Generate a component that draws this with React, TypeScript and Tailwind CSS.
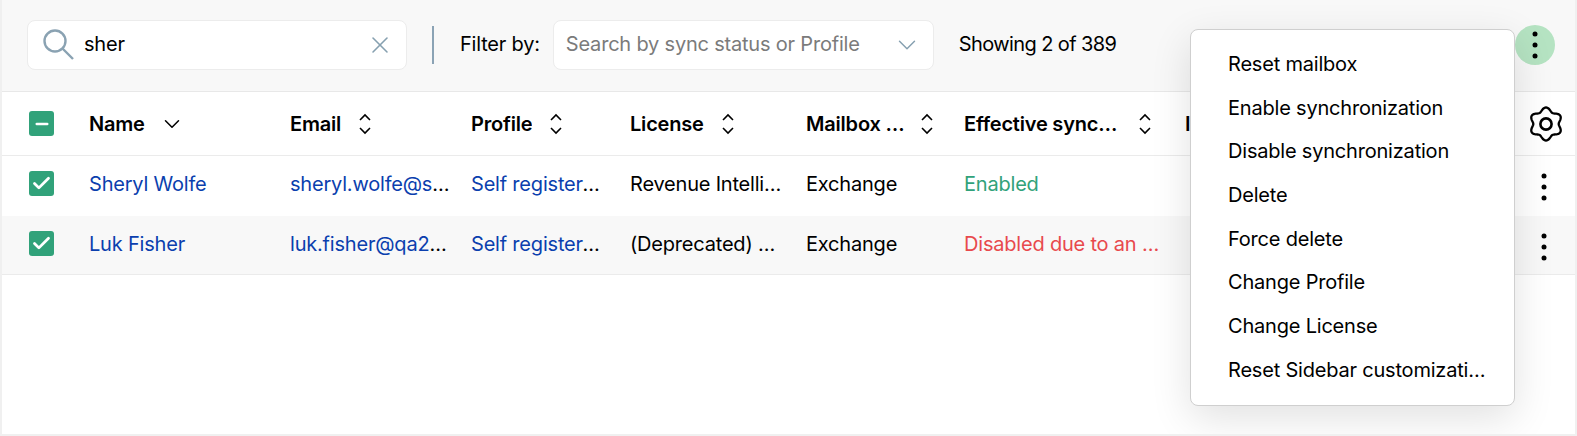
import { ChevronDown, X, Check, Minus } from "lucide-react";

const gridCols = "grid grid-cols-[87px_201px_181px_159px_176px_158px_221px_1fr_60px] items-center";

const menuItems = [
  "Reset mailbox",
  "Enable synchronization",
  "Disable synchronization",
  "Delete",
  "Force delete",
  "Change Profile",
  "Change License",
  "Reset Sidebar customization",
];

// six soft lobes round the centre
const gearPath =
  Array.from({ length: 120 }, (_, i) => {
    const a = (i / 120) * Math.PI * 2;
    const r = 14.6 + 1.9 * Math.cos(6 * a);
    return `${i === 0 ? "M" : "L"}${(18 + r * Math.sin(a)).toFixed(2)} ${(18 - r * Math.cos(a)).toFixed(2)}`;
  }).join(" ") + " Z";

function SortIcon() {
  return (
    <svg width="14" height="24" viewBox="0 0 14 24" fill="none" stroke="#000" strokeWidth="1.6" className="shrink-0">
      <path d="M2 8 L7 3 L12 8" />
      <path d="M2 16 L7 21 L12 16" />
    </svg>
  );
}

function Kebab() {
  return (
    <svg width="6" height="28" viewBox="0 0 6 28" fill="#000">
      <circle cx="3" cy="3" r="2.5" />
      <circle cx="3" cy="14" r="2.5" />
      <circle cx="3" cy="25" r="2.5" />
    </svg>
  );
}

function HeaderCell({ label, gap = "gap-[17px]", width }: { label: string; gap?: string; width: string }) {
  return (
    <div className={`flex items-center ${gap}`}>
      <span className={`truncate whitespace-pre font-semibold ${width}`}>{label}</span>
      <SortIcon />
    </div>
  );
}

function Row({ name, email, license, status, statusColor, shaded }: { name: string; email: string; license: string; status: string; statusColor: string; shaded?: boolean }) {
  return (
    <div className={`${gridCols} h-[59.5px] ${shaded ? "border-b border-[#ebebeb] bg-[#f8f8f8] pb-[2px]" : "bg-white pb-[4px]"}`}>
      <div className="pl-[27px]">
        <div className="flex h-[25px] w-[25px] items-center justify-center rounded-[3px] bg-[#31a27a]">
          <Check size={21} strokeWidth={3.2} color="#fff" />
        </div>
      </div>
      <div className="truncate text-[#0b3fae]">{name}</div>
      <div className="w-[161px] truncate"><span className="text-[#0b3fae]">{email}</span></div>
      <div className="w-[132px] truncate"><span className="text-[#0b3fae]">Self registered users</span></div>
      <div className="w-[155px] truncate">{license}</div>
      <div>Exchange</div>
      <div className={`w-[198px] truncate ${statusColor}`}>{status}</div>
      <div />
      <div className="flex translate-y-[3px] justify-center pr-[2px]"><Kebab /></div>
    </div>
  );
}

export default function App() {
  return (
    <div className="relative h-[436px] w-[1577px] overflow-hidden border-x-2 border-b-2 border-[#f0f0f0] bg-white font-['Inter',sans-serif] text-[20px] tracking-[-0.01em] text-black">
      {/* toolbar */}
      <div className="flex h-[92px] items-center border-b border-[#e8e8e8] bg-[#f8f8f8] pb-[2px] pl-[25px]">
        <div className="flex h-[50px] w-[380px] items-center rounded-lg border border-[#ececec] bg-white pl-[15px] pr-[12px]">
          <svg width="31" height="31" viewBox="0 0 31 31" fill="none" stroke="#8aa2b2" strokeWidth="2.4">
            <circle cx="12" cy="12" r="10.5" />
            <path d="M19.5 19.5 L30 30" />
          </svg>
          <span className="ml-[10px] flex-1 pb-[2px]">sher</span>
          <X size={28} strokeWidth={1.3} color="#86a0b0" />
        </div>
        <div className="ml-[25px] h-[38px] w-[2px] bg-[#8ba3b5]" />
        <span className="ml-[26px] pb-[2px]">Filter by:</span>
        <div className="ml-[13px] flex h-[50px] w-[381px] items-center justify-between rounded-lg border border-[#ececec] bg-white pl-[12px] pr-[11px]">
          <span className="pb-[1px] text-[#7b7b7b]">Search by sync status or Profile</span>
          <ChevronDown size={30} strokeWidth={1.15} color="#86a0b0" />
        </div>
        <span className="ml-[25px] pb-[2px] tracking-[-0.03em]">Showing 2 of 389</span>
        <div className="ml-auto mr-[20px] flex h-10 w-10 items-center justify-center rounded-full bg-[#b5e3c2]">
          <Kebab />
        </div>
      </div>

      {/* table header */}
      <div className={`${gridCols} h-[64px] border-b border-[#ebebeb]`}>
        <div className="pl-[27px]">
          <div className="flex h-[25px] w-[25px] items-center justify-center rounded-[3px] bg-[#31a27a]">
            <Minus size={18} strokeWidth={3.4} color="#fff" />
          </div>
        </div>
        <div className="flex items-center gap-[14px]">
          <span className="font-semibold">Name</span>
          <ChevronDown size={26} strokeWidth={1.4} />
        </div>
        <HeaderCell label="Email" width="" />
        <HeaderCell label="Profile" width="" />
        <HeaderCell label="License" width="" />
        <HeaderCell label="Mailbox type" width="w-[100px]" gap="gap-[14px]" />
        <HeaderCell label="Effective sync status" width="w-[157px]" gap="gap-[17px]" />
        <div className="font-semibold">I</div>
        <div className="flex justify-center pl-[2px]">
          <svg width="36" height="36" viewBox="0 0 36 36" fill="none" stroke="#000" strokeWidth="2.3">
            <path d={gearPath} />
            <circle cx="18" cy="18" r="5.6" strokeWidth="2.6" />
          </svg>
        </div>
      </div>

      <Row name="Sheryl Wolfe" email="sheryl.wolfe@sherweb.com" license="Revenue Intelligence" status="Enabled" statusColor="text-[#31a27a]" />
      <Row name="Luk Fisher" email="luk.fisher@qa2.example.com" license="(Deprecated) Sales Cloud" status="Disabled due to an error" statusColor="text-[#e8494d]" shaded />

      {/* action menu */}
      <div className="absolute left-[1188px] top-[29px] h-[377px] w-[325px] rounded-lg border border-[#cfcfcf] bg-white pl-[37px] pr-[27px] pt-[12px] shadow-[0_12px_40px_rgba(0,0,0,0.12)]">
        {menuItems.map((item) => (
          <div key={item} className="flex h-[43.7px] items-center"><span className="truncate">{item}</span></div>
        ))}
      </div>
    </div>
  );
}
